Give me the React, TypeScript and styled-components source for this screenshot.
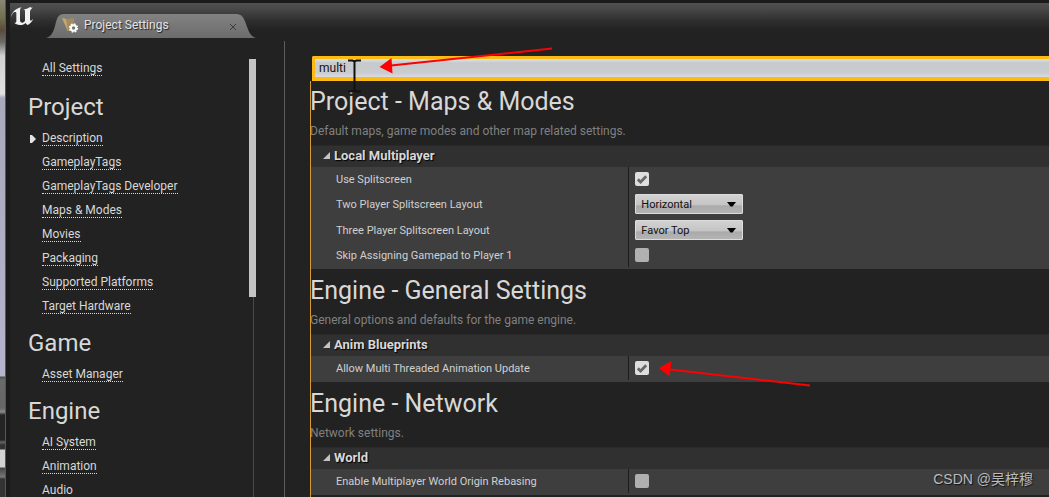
import React from "react";
import styled, { createGlobalStyle } from "styled-components";

const Global = createGlobalStyle`
  * { box-sizing: border-box; }
  html, body { margin: 0; background: #1b1b1b; }
  body { font-family: Roboto, "Liberation Sans", sans-serif; color: #d8d8d8; }
`;

const Desktop = styled.div`
  position: relative;
  display: flex;
  height: 100vh;
  overflow: hidden;
`;

const Backdrop = styled.div`
  flex: none;
  width: 6px;
  border-right: 1px solid #55555a;
  background: linear-gradient(#8a8674 0, #6f7050 18px, #5c4a3c 30px, #6a6a68 42px, #d0d0d0 56px, #e0e0e0 94px,
    #a9a9bd 98px, #b4b4cc 376px, #4e4e4e 377px, #6a6a6a 380px, #666 408px, #8a8a8a 412px, #242424 415px, #242424 440px,
    #666 442px, #333 445px, #333 449px, #d2d2d2 450px, #d2d2d2 467px, #444 468px, #777 477px, #333 479px, #333 100%);
`;

const Window = styled.div`
  flex: 1;
  min-width: 0;
  display: flex;
  flex-direction: column;
  background: #222222;
  border-top: 3px solid #1b1b1b;
  border-left: 4px solid #1b1b1b;
`;

const TitleBar = styled.header`
  flex: none;
  display: flex;
  align-items: flex-start;
  height: 35px;
  background: linear-gradient(#505050, #484848 6px, #2e2e2e 18px, #222222 27px);
`;

const Logo = styled.svg`
  flex: none;
  width: 24px;
  height: 22px;
  margin: 3px 11px 0 1px;
`;

const Tab = styled.div`
  display: grid;
  align-self: flex-end;
  width: 210px;
  height: 24px;
  > * { grid-area: 1 / 1; }
`;

const TabContent = styled.div`
  display: flex;
  align-items: center;
  padding: 0 20px 2px 16px;
  font-size: 12px;
  line-height: 16px;
  color: #e4e4e4;
  text-shadow: 1px 1px 1px #222;
`;

const TabTitle = styled.span`
  flex: 1;
  padding-left: 5px;
`;

const CloseButton = styled.button`
  display: flex;
  padding: 0;
  margin-top: 3px;
  border: 0;
  background: none;
`;

const Body = styled.div`
  flex: 1;
  min-height: 0;
  display: flex;
`;

const Sidebar = styled.nav`
  flex: none;
  display: flex;
  width: 247px;
  padding-top: 18px;
`;

const LinkList = styled.div`
  flex: 1;
  min-width: 0;
  padding-left: 18px;
`;

const LinkGroup = styled.section`
  &:first-of-type { margin-top: 2px; }
`;

const GroupTitle = styled.h2`
  margin: 0;
  padding-top: 9px;
  height: 44px;
  font-size: 24px;
  font-weight: 400;
  line-height: 32px;
`;

const LinkRow = styled.div`
  display: flex;
  align-items: center;
  height: 24px;
  padding-top: 2px;
`;

const Marker = styled.span`
  display: flex;
  width: 14px;
  padding-left: 2px;
`;

const NavLink = styled.a`
  border-bottom: 1px dotted #d8d8d8;
  font-size: 12px;
  line-height: 13px;
  color: #d8d8d8;
  text-decoration: none;
`;

const ScrollTrack = styled.div`
  flex: none;
  width: 8px;
  padding-top: 3px;
  background: linear-gradient(#4a4a4a, #4a4a4a) 4px 3px / 1px 100% no-repeat;
`;

const ScrollThumb = styled.div`
  width: 7px;
  height: 238px;
  background: #c4c4c4;
`;

const Divider = styled.div`
  flex: none;
  width: 1px;
  margin: 3px 25px 0 27px;
  background: #5c5c5c;
`;

const Main = styled.main`
  flex: 1;
  min-width: 0;
  display: flex;
  flex-direction: column;
  padding-top: 18px;
`;

const Search = styled.input`
  flex: none;
  display: block;
  height: 25px;
  margin-left: 2px;
  padding: 0 4px;
  border: 3px solid #fbba14;
  border-width: 3px 0 4px 3px;
  border-radius: 2px 0 0 0;
  outline: 0;
  background: linear-gradient(#dfe2e5, #c6cacd 4px, #cacccf 14px, #dcdcdf);
  font: 12px/16px Roboto, "Liberation Sans", sans-serif;
  color: #111;
`;

const Results = styled.div`
  flex: 1;
  min-height: 0;
  overflow: hidden;
  border-left: 1px solid #d79b35;
`;

const SectionHead = styled.header`
  height: 64px;
  padding-top: 4px;
  margin-left: -1px;
`;

const SectionTitle = styled.h1`
  margin: 0;
  font-size: 25px;
  font-weight: 400;
  line-height: 34px;
`;

const SectionNote = styled.p`
  margin: 4px 0 0;
  font-size: 12px;
  line-height: 16px;
  color: #808080;
`;

const Section = styled.section`
  & + & ${SectionHead} { height: 65px; padding-top: 5px; }
`;

const Category = styled.h3`
  display: flex;
  align-items: center;
  gap: 4px;
  height: 22px;
  margin: 0;
  padding: 0 0 2px 12px;
  border-top: 1px solid #2a2a2a;
  background: #303030;
  font-size: 13px;
  font-weight: 700;
  line-height: 16px;
  text-shadow: 1px 1px 1px #000;
`;

const Properties = styled.div`
  padding-bottom: 2px;
  background: #3e3e3e;
`;

const Property = styled.div<{ $tall?: boolean }>`
  display: grid;
  grid-template-columns: 43% 1fr;
  height: ${(p) => (p.$tall ? 26 : 24)}px;
`;

const PropertyLabel = styled.label`
  display: flex;
  align-items: center;
  padding-left: 25px;
  font-size: 11px;
  color: #d0d0d0;
`;

const PropertyValue = styled.div`
  display: flex;
  align-items: center;
  padding-left: 6px;
  border-left: 1px solid #1c1c1c;
`;

const Stack = styled.span`
  display: grid;
  align-items: center;
  > * { grid-area: 1 / 1; }
  > svg { pointer-events: none; }
`;

const CheckBox = styled.input`
  appearance: none;
  width: 14px;
  height: 14px;
  margin: 0;
  border-radius: 2px;
  background: #b0b0b0;
  &:checked { background: #dedede; }
  & + svg { visibility: hidden; }
  &:checked + svg { visibility: visible; }
`;

const Select = styled.select`
  appearance: none;
  width: 108px;
  height: 20px;
  padding: 1px 5px 0;
  border: 1px solid #dcdcdc;
  border-radius: 1px;
  background: linear-gradient(#d2d2d2, #c4c4c4 55%, #aaaaaa 60%, #b4b4b4);
  font: 11px/16px Roboto, "Liberation Sans", sans-serif;
  color: #111;
`;

const SelectArrow = styled.svg`
  justify-self: end;
  margin-right: 7px;
`;

const Annotations = styled.svg`
  position: absolute;
  top: 0;
  left: 0;
  pointer-events: none;
`;

const Watermark = styled.span`
  position: absolute;
  right: 16px;
  bottom: 8px;
  font: 14px/20px "Liberation Sans", "Noto Sans CJK SC", sans-serif;
  color: #bcbcbc;
  text-shadow: 1px 1px 1px #111;
`;

type Prop = { label: string; checked?: boolean; value?: string };
type Sect = { title: string; note: string; category: string; props: Prop[] };

const groups = [
  {
    title: "Project",
    links: ["Description", "GameplayTags", "GameplayTags Developer", "Maps & Modes", "Movies", "Packaging", "Supported Platforms", "Target Hardware"],
  },
  { title: "Game", links: ["Asset Manager"] },
  { title: "Engine", links: ["AI System", "Animation", "Audio"] },
];

const sections: Sect[] = [
  {
    title: "Project - Maps & Modes",
    note: "Default maps, game modes and other map related settings.",
    category: "Local Multiplayer",
    props: [
      { label: "Use Splitscreen", checked: true },
      { label: "Two Player Splitscreen Layout", value: "Horizontal" },
      { label: "Three Player Splitscreen Layout", value: "Favor Top" },
      { label: "Skip Assigning Gamepad to Player 1", checked: false },
    ],
  },
  {
    title: "Engine - General Settings",
    note: "General options and defaults for the game engine.",
    category: "Anim Blueprints",
    props: [{ label: "Allow Multi Threaded Animation Update", checked: true }],
  },
  {
    title: "Engine - Network",
    note: "Network settings.",
    category: "World",
    props: [{ label: "Enable Multiplayer World Origin Rebasing", checked: false }],
  },
];

function SidebarLink({ text, current }: { text: string; current?: boolean }) {
  return (
    <LinkRow>
      <Marker>
        {current && (
          <svg width="6" height="8" viewBox="0 0 6 8">
            <path d="M0 0h2l4 4-4 4H0z" fill="#e4e4e4" />
          </svg>
        )}
      </Marker>
      <NavLink href="#">{text}</NavLink>
    </LinkRow>
  );
}

function PropertyRow({ item }: { item: Prop }) {
  const id = item.label.toLowerCase().replace(/\s+/g, "-");
  return (
    <Property $tall={item.value !== undefined}>
      <PropertyLabel htmlFor={id}>{item.label}</PropertyLabel>
      <PropertyValue>
        {item.value !== undefined ? (
          <Stack>
            <Select id={id} defaultValue={item.value}>
              <option>{item.value}</option>
            </Select>
            <SelectArrow width="9" height="5" viewBox="0 0 9 5">
              <path d="M0 0h9L5.500 4.500h-2z" fill="#000" />
            </SelectArrow>
          </Stack>
        ) : (
          <Stack>
            <CheckBox id={id} type="checkbox" defaultChecked={item.checked} />
            <svg width="14" height="14" viewBox="0 0 14 14">
              <path d="M2.800 7.400L5.600 10L11.200 4.200" fill="none" stroke="#68686a" strokeWidth="2.800" />
            </svg>
          </Stack>
        )}
      </PropertyValue>
    </Property>
  );
}

export default function App() {
  return (
    <Desktop>
      <Global />
      <Backdrop />
      <Window>
        <TitleBar>
          <Logo viewBox="0 0 72 66" fill="#f2f2f2">
            <path d="M0 33C3 18 14 7 32 4C28 7 27 10 27 15V42C27 48 31 51 35 50C39 49 42 46 42 43V15C42 12 40 11 37 11C43 10 51 8 57 3C60 5 64 6 66 4C61 9 57 12 57 17V41C57 45 61 45 67 38C63 48 56 54 49 57L43 51C39 56 32 58 26 57C19 56 14 54 10 50C14 51 16 49 16 45V22C16 18 14 17 10 18C6 20 3 25 0 33Z" />
          </Logo>
          <Tab>
            <svg width="210" height="24" viewBox="0 0 210 24">
              <defs>
                <linearGradient id="tabFill" x1="0" y1="0" x2="0" y2="1">
                  <stop offset="0" stopColor="#828282" />
                  <stop offset="1" stopColor="#6c6c6c" />
                </linearGradient>
              </defs>
              <path d="M0 24C6 22 7 18 9 12C11 4 12 0 18 0H190C196 0 198 4 200 10C203 18 204 22 210 24Z" fill="url(#tabFill)" />
            </svg>
            <TabContent>
              <svg width="17" height="16" viewBox="0 0 17 16">
                <path d="M0 1L4 2L12 1L12 8L8 14H5L4 9Z" fill="#a58a5a" />
                <path d="M0 1L4 2L6 14L3 8Z" fill="#c2a676" />
                <circle cx="11.500" cy="11" r="2.700" fill="none" stroke="#fff" strokeWidth="2" />
                <circle cx="11.500" cy="11" r="4" fill="none" stroke="#fff" strokeWidth="1.400" strokeDasharray="1.700 1.440" />
              </svg>
              <TabTitle>Project Settings</TabTitle>
              <CloseButton aria-label="Close tab">
                <svg width="6" height="6" viewBox="0 0 6 6">
                  <path d="M0 0L6 6M6 0L0 6" stroke="#3c3c3c" />
                </svg>
              </CloseButton>
            </TabContent>
          </Tab>
        </TitleBar>
        <Body>
          <Sidebar>
            <LinkList>
              <SidebarLink text="All Settings" />
              {groups.map((group) => (
                <LinkGroup key={group.title}>
                  <GroupTitle>{group.title}</GroupTitle>
                  {group.links.map((text) => (
                    <SidebarLink key={text} text={text} current={text === "Description"} />
                  ))}
                </LinkGroup>
              ))}
            </LinkList>
            <ScrollTrack>
              <ScrollThumb />
            </ScrollTrack>
          </Sidebar>
          <Divider />
          <Main>
            <Search aria-label="Search settings" defaultValue="multi" />
            <Results>
              {sections.map((section) => (
                <Section key={section.title}>
                  <SectionHead>
                    <SectionTitle>{section.title}</SectionTitle>
                    <SectionNote>{section.note}</SectionNote>
                  </SectionHead>
                  <Category>
                    <svg width="7" height="7" viewBox="0 0 7 7">
                      <path d="M7 0V7H0Z" fill="#c4c4c4" />
                    </svg>
                    {section.category}
                  </Category>
                  <Properties>
                    {section.props.map((item) => (
                      <PropertyRow key={item.label} item={item} />
                    ))}
                  </Properties>
                </Section>
              ))}
            </Results>
          </Main>
        </Body>
      </Window>
      <Annotations width="1049" height="497" viewBox="0 0 1049 497">
        <path d="M348 60.500h4.500l2 1 2-1h4.500M354.500 61v30M348 91.500h4.500l2-1 2 1h4.500" fill="none" stroke="#111" strokeWidth="2" />
        <path d="M391 65.500L552 48.500M670 369.500L810 385.500" stroke="#fe0000" strokeWidth="2" />
        <path d="M379.500 67L391.500 58L392.500 73.500ZM659 368L671.500 361L669.500 376.500Z" fill="#fe0000" />
      </Annotations>
      <Watermark>CSDN @吴梓穆</Watermark>
    </Desktop>
  );
}
